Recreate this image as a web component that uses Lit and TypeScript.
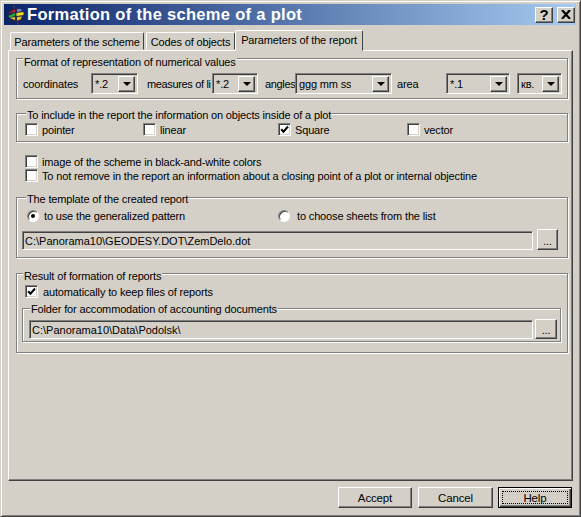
import { LitElement, html, css } from "lit";
import { customElement } from "lit/decorators.js";

const CHECK = html`<svg width="9" height="9" viewBox="0 0 9 9"><path d="M1.2 4.2l2.3 2.5L8 1.5" fill="none" stroke="#000" stroke-width="2"/></svg>`;

@customElement("app-root")
export class AppRoot extends LitElement {
  static styles = css`
    :host { display: block; width: 581px; height: 517px; font: 11px "Liberation Sans", Arial, sans-serif; letter-spacing: -0.15px; color: #000; }
    * { box-sizing: border-box; }
    .win { width: 581px; height: 517px; background: #d4d0c8; border: 1px solid; border-color: #d4d0c8 #404040 #404040 #d4d0c8; box-shadow: inset 1px 1px 0 #fff, inset -1px -1px 0 #808080; padding: 3px 4px 0 3px; display: flex; flex-direction: column; }
    .title { height: 21px; flex: none; background: linear-gradient(90deg, #0a246a, #a6caf0); display: flex; align-items: center; padding: 0 1px 0 3px; color: #fff; font: bold 16.5px "Liberation Sans", sans-serif; letter-spacing: 0.31px; gap: 2px; }
    .title svg { flex: none; }
    .title .t { flex: 1; white-space: nowrap; }
    .cap { width: 18px; height: 16px; background: #d4d0c8; border: 1px solid; border-color: #fff #404040 #404040 #fff; box-shadow: inset -1px -1px 0 #808080; color: #000; display: flex; align-items: center; justify-content: center; font: bold 15px "Liberation Sans", sans-serif; letter-spacing: 0; }
    .cap + .cap { margin-left: 2px; }
    .tabs { display: flex; height: 20px; margin: 5px 0 0 6px; align-items: flex-end; flex: none; position: relative; z-index: 1; }
    .tab { height: 18px; padding-top: 3px; border: 1px solid; border-color: #fff #404040 transparent #fff; border-radius: 2px 2px 0 0; white-space: nowrap; text-align: center; }
    .tab.a { height: 21px; padding-top: 3px; background: #d4d0c8; margin-bottom: -1px; }
    .t1 { width: 134px; margin-right: 2px; }
    .t2 { width: 89px; }
    .t3 { width: 128px; }
    .panel { height: 431px; width: 565px; margin-left: 4px; flex: none; border: 1px solid; border-color: #fff #404040 #404040 #fff; box-shadow: inset -1px -1px 0 #808080; padding: 7px 0 0 7px; display: flex; flex-direction: column; }
    fieldset { margin: 0; padding: 0; min-width: 0; border: 1px solid #808080; box-shadow: inset 1px 1px 0 #fff, 1px 1px 0 #fff; position: relative; }
    .lg { position: absolute; background: #d4d0c8; line-height: 12px; white-space: nowrap; padding: 0 1px; }
    .lg1 { top: -3px; left: 6px; }
    .lg2 { top: -5px; left: 9px; }
    .lg4 { top: -4px; left: 6px; }
    .lg5 { top: -6px; left: 7px; }
    .g1 { height: 41px; width: 552px; margin-bottom: 14px; display: flex; align-items: center; padding: 14px 0 0 6px; }
    .g2 { height: 29px; width: 552px; display: flex; align-items: center; padding: 9px 0 0 8px; }
    .g3 { height: 61px; width: 552px; margin-top: 15px; display: flex; flex-direction: column; }
    .g4 { height: 80px; width: 552px; margin-top: 15px; display: flex; flex-direction: column; }
    .lbl { white-space: nowrap; flex: none; }
    .l1 { width: 68px; }
    .l2 { width: 65px; margin-left: 9px; letter-spacing: -0.35px; }
    .l3 { width: 30px; margin-left: 7px; letter-spacing: -0.35px; }
    .l4 { width: 49px; margin-left: 5px; }
    .sp { width: 7px; flex: none; }
    .combo { height: 21px; background: #d4d0c8; border: 1px solid; border-color: #808080 #fff #fff #808080; box-shadow: inset 1px 1px 0 #404040; display: flex; align-items: center; justify-content: space-between; padding: 0 2px 0 3px; flex: none; }
    .combo .v { white-space: nowrap; overflow: hidden; }
    .arrow { width: 17px; height: 16px; flex: none; border: 1px solid; border-color: #fff #404040 #404040 #fff; box-shadow: inset -1px -1px 0 #808080; display: flex; align-items: center; justify-content: center; }
    .arrow::after { content: ""; border: 4px solid transparent; border-top-color: #000; border-bottom: 0; }
    .cb { width: 13px; height: 13px; flex: none; background: #fff; border: 1px solid; border-color: #808080 #fff #fff #808080; box-shadow: inset 1px 1px 0 #404040, inset -1px -1px 0 #d4d0c8; display: flex; align-items: center; justify-content: center; }
    .opt { display: flex; align-items: center; gap: 4px; white-space: nowrap; flex: none; }
    .w118 { width: 118px; } .w135 { width: 135px; } .w129 { width: 129px; }
    .alone { display: flex; flex-direction: column; gap: 1px; margin: 13px 0 0 9px; height: 27px; flex: none; }
    .radios { display: flex; margin: 12px 0 0 10px; align-items: center; height: 12px; flex: none; }
    .rad { width: 12px; height: 12px; border-radius: 50%; background: #fff; border: 1px solid; border-color: #808080 #fff #fff #808080; box-shadow: inset 1px 1px 0 #404040; flex: none; display: flex; align-items: center; justify-content: center; }
    .rad.on::after { content: ""; width: 4px; height: 4px; border-radius: 50%; background: #000; }
    .r1 { width: 251px; display: flex; gap: 5px; align-items: center; flex: none; }
    .r2 { display: flex; gap: 7px; align-items: center; }
    .path { display: flex; align-items: flex-end; }
    .path3 { margin: 7px 0 0 5px; gap: 4px; }
    .path5 { gap: 2px; }
    .inp { flex: none; background: #d4d0c8; height: 19px; border: 1px solid; border-color: #808080 #fff #fff #808080; box-shadow: inset 1px 1px 0 #404040; padding: 1px 0 0 2px; line-height: 16px; white-space: nowrap; letter-spacing: 0; }
    .i3 { width: 511px; }
    .i5 { width: 504px; }
    .dots { height: 21px; flex: none; border: 1px solid; border-color: #fff #404040 #404040 #fff; box-shadow: inset -1px -1px 0 #808080; display: flex; align-items: center; justify-content: center; padding-top: 2px; }
    .d3 { width: 21px; }
    .d5 { width: 22px; height: 20px; }
    .keep { margin: 11px 0 0 8px; gap: 5px; }
    .inner { width: 539px; height: 34px; margin: 10px 0 0 5px; padding: 10px 0 0 6px; flex: none; }
    .foot { display: flex; margin-top: 6px; justify-content: flex-end; padding-right: 4px; flex: none; }
    .btn { height: 21px; display: flex; align-items: center; justify-content: center; border: 1px solid; border-color: #fff #404040 #404040 #fff; box-shadow: inset -1px -1px 0 #808080; font-size: 11.5px; }
    .b1 { width: 74px; margin-right: 6px; }
    .b2 { width: 75px; margin-right: 5px; }
    .b3 { width: 74px; }
    .btn.d { border: 1px solid #000; box-shadow: inset 1px 1px 0 #fff, inset -1px -1px 0 #404040, inset -2px -2px 0 #808080; position: relative; }
    .btn.d::after { content: ""; position: absolute; inset: 3px; border: 1px dotted #000; }
  `;

  private combo(v: string, w: number) {
    return html`<div class="combo" style="width:${w}px"><span class="v">${v}</span><span class="arrow"></span></div>`;
  }

  private check(label: string, on = false, cls = "") {
    return html`<div class="opt ${cls}"><span class="cb">${on ? CHECK : ""}</span>${label}</div>`;
  }

  render() {
    return html`<div class="win">
      <div class="title">
        <svg width="18" height="20" viewBox="0 0 18 20">
          <path d="M6 0l2 3M12 20l-2-3" stroke="#3a3a6a" stroke-width="1.5"/>
          <ellipse cx="9" cy="10" rx="8.5" ry="7.5" fill="#26264e"/>
          <path d="M2 8l6-3.500V7z" fill="#d8202a"/>
          <path d="M1.500 11l6.500-3v2.500L3 13z" fill="#20b040"/>
          <path d="M9.500 8l7-1v3l-7 1z" fill="#f0dc20"/>
          <path d="M3 13l5-1v3z" fill="#e0d020"/>
          <path d="M10 12l5-.5-1.500 3-3.500 1z" fill="#d8c820"/>
          <path d="M10 4h4l1 2-5 1z" fill="#7080c0"/>
        </svg>
        <span class="t">Formation of the scheme of a plot</span>
        <span class="cap">?</span><span class="cap">
          <svg width="10" height="9" viewBox="0 0 10 9"><path d="M1 0l8 9M9 0L1 9" stroke="#000" stroke-width="2.200"/></svg>
        </span>
      </div>
      <div class="tabs">
        <div class="tab t1">Parameters of the scheme</div>
        <div class="tab t2">Codes of objects</div>
        <div class="tab a t3">Parameters of the report</div>
      </div>
      <div class="panel">
        <fieldset class="g1">
          <span class="lg lg1">Format of representation of numerical values</span>
          <span class="lbl l1">coordinates</span>
          ${this.combo("*.2", 47)}
          <span class="lbl l2">measures of li</span>
          ${this.combo("*.2", 46)}
          <span class="lbl l3">angles</span>
          ${this.combo("ggg mm ss", 97)}
          <span class="lbl l4">area</span>
          ${this.combo("*.1", 64)}
          <span class="sp"></span>
          ${this.combo("кв.", 45)}
        </fieldset>
        <fieldset class="g2">
          <span class="lg lg2">To include in the report the information on objects inside of a plot</span>
          ${this.check("pointer", false, "w118")}
          ${this.check("linear", false, "w135")}
          ${this.check("Square", true, "w129")}
          ${this.check("vector")}
        </fieldset>
        <div class="alone">
          ${this.check("image of the scheme in black-and-white colors")}
          ${this.check("To not remove in the report an information about a closing point of a plot or internal objectine")}
        </div>
        <fieldset class="g3">
          <span class="lg lg2">The template of the created report</span>
          <div class="radios">
            <div class="r1"><span class="rad on"></span>to use the generalized pattern</div>
            <div class="r2"><span class="rad"></span>to choose sheets from the list</div>
          </div>
          <div class="path path3">
            <div class="inp i3">C:\\Panorama10\\GEODESY.DOT\\ZemDelo.dot</div>
            <div class="dots d3">...</div>
          </div>
        </fieldset>
        <fieldset class="g4">
          <span class="lg lg4">Result of formation of reports</span>
          ${this.check("automatically to keep files of reports", true, "keep")}
          <fieldset class="inner">
            <span class="lg lg5">Folder for accommodation of accounting documents</span>
            <div class="path path5">
              <div class="inp i5">C:\\Panorama10\\Data\\Podolsk\\</div>
              <div class="dots d5">...</div>
            </div>
          </fieldset>
        </fieldset>
      </div>
      <div class="foot">
        <div class="btn b1">Accept</div>
        <div class="btn b2">Cancel</div>
        <div class="btn d b3">Help</div>
      </div>
    </div>`;
  }
}
